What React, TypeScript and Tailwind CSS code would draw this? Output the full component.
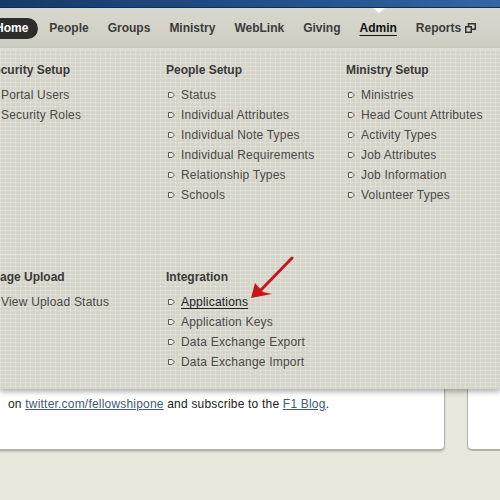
import type { ReactNode } from 'react';

type Column = { title: string; items: string[]; active?: string };

const topColumns: Column[] = [
  { title: 'Security Setup', items: ['Portal Users', 'Security Roles'] },
  {
    title: 'People Setup',
    items: ['Status', 'Individual Attributes', 'Individual Note Types', 'Individual Requirements', 'Relationship Types', 'Schools'],
  },
  {
    title: 'Ministry Setup',
    items: ['Ministries', 'Head Count Attributes', 'Activity Types', 'Job Attributes', 'Job Information', 'Volunteer Types'],
  },
];

const bottomColumns: Column[] = [
  { title: 'Image Upload', items: ['View Upload Status'] },
  {
    title: 'Integration',
    items: ['Applications', 'Application Keys', 'Data Exchange Export', 'Data Exchange Import'],
    active: 'Applications',
  },
];

const navItems = ['People', 'Groups', 'Ministry', 'WebLink', 'Giving'];

function Bullet() {
  return (
    <svg width="7" height="6" viewBox="0 0 7 6" className="shrink-0">
      <path d="M0.5 0.5H4L6.5 3L4 5.5H0.5Z" fill="#ecebe3" stroke="#5a5a55" strokeWidth="1" />
    </svg>
  );
}

function MenuColumn({ col }: { col: Column }) {
  return (
    <div className="w-[180px] shrink-0">
      <h3 className="h-[16px] leading-[16px] text-[12px] font-bold text-[#3a3a38]">{col.title}</h3>
      <ul className="mt-[7px]">
        {col.items.map((item) => (
          <li key={item} className="h-[20px] flex items-center gap-[6px] ml-[2px]">
            <Bullet />
            <span
              className={
                item === col.active
                  ? 'text-[12px] tracking-[0.2px] text-[#222] underline underline-offset-2 whitespace-nowrap'
                  : 'text-[12px] tracking-[0.2px] text-[#4a4a46] whitespace-nowrap'
              }
            >
              {item}
            </span>
          </li>
        ))}
      </ul>
    </div>
  );
}

function Section({ cols, className, children }: { cols: Column[]; className: string; children?: ReactNode }) {
  return (
    <div className={className}>
      <div className="flex ml-[-14px]">
        {cols.map((c) => (
          <MenuColumn key={c.title} col={c} />
        ))}
      </div>
      {children}
    </div>
  );
}

export default function App() {
  return (
    <div className="relative w-[500px] h-[500px] overflow-hidden bg-[#e9e8dd] font-['Liberation_Sans',Arial,sans-serif]">
      {/* top strip */}
      <div className="h-[8px] bg-[linear-gradient(90deg,#163a69,#24528a_60%,#3566a0)] border-b border-[#0f2d55]" />

      {/* main nav */}
      <div className="relative h-[40px] bg-[linear-gradient(#d9d8ce,#cecdc2)] flex items-center">
        <div className="absolute left-[373px] top-0 w-0 h-0 border-l-[6px] border-r-[6px] border-t-[5px] border-l-transparent border-r-transparent border-t-white" />
        <div className="ml-[-15px] h-[21px] pl-[10px] pr-[10px] rounded-full bg-[#2d2d2b] flex items-center shrink-0">
          <span className="text-[12px] font-bold text-white">Home</span>
        </div>
        <div className="flex items-center ml-[11px] gap-[19px] shrink-0">
          {navItems.map((n) => (
            <span key={n} className="text-[12px] font-bold text-[#3c3c3a]">
              {n}
            </span>
          ))}
          <span className="text-[12px] font-bold text-[#111] underline underline-offset-[3px]">Admin</span>
          <span className="flex items-center gap-[4px]">
            <span className="text-[12px] font-bold text-[#3c3c3a]">Reports</span>
            <svg width="11" height="10" viewBox="0 0 11 10">
              <rect x="3.5" y="0.75" width="6.75" height="5.5" fill="none" stroke="#333" strokeWidth="1.5" />
              <rect x="0.75" y="3.75" width="5.5" height="5.5" fill="#d3d2c8" stroke="#333" strokeWidth="1.5" />
            </svg>
          </span>
        </div>
      </div>

      {/* page content under the dropdown */}
      <div className="flex gap-[22px] ml-[-10px] h-[403px]">
        <div className="w-[455px] shrink-0 h-full bg-white rounded-b-[5px] border-b-2 border-r border-[#b3b2a8] shadow-[0_1px_2px_rgba(0,0,0,0.15)] flex flex-col justify-end pb-[37px] pl-[18px]">
          <p className="text-[12px] tracking-[0.2px] text-[#222] leading-[16px] whitespace-nowrap">
            on <span className="text-[#41597a] underline">twitter.com/fellowshipone</span> and subscribe to the{' '}
            <span className="text-[#41597a] underline">F1 Blog</span>.
          </p>
        </div>
        <div className="w-[60px] shrink-0 h-full bg-white rounded-b-[5px] border-b-2 border-l border-[#b3b2a8]" />
      </div>

      {/* admin dropdown */}
      <div className="absolute left-0 top-[48px] w-[500px] h-[341px] bg-[#d5d4c9] bg-[image:linear-gradient(90deg,rgba(255,255,255,0.22)_1px,transparent_1px),linear-gradient(rgba(255,255,255,0.22)_1px,transparent_1px)] bg-[size:5px_4px] border-t-2 border-[#e0dfd6] shadow-[0_3px_5px_rgba(0,0,0,0.3)]">
        <Section cols={topColumns} className="h-[204px] pt-[12px]" />
        <Section cols={bottomColumns} className="h-[135px] pt-[14px] border-t border-[#e6e5dc]" />
      </div>

      {/* annotation arrow */}
      <svg className="absolute left-0 top-0 pointer-events-none" width="500" height="500" viewBox="0 0 500 500">
        <line x1="292" y1="258" x2="260" y2="291" stroke="#c8161d" strokeWidth="3" strokeLinecap="round" />
        <path d="M251 298L255 283L263 292L272 294Z" fill="#c8161d" />
      </svg>
    </div>
  );
}
